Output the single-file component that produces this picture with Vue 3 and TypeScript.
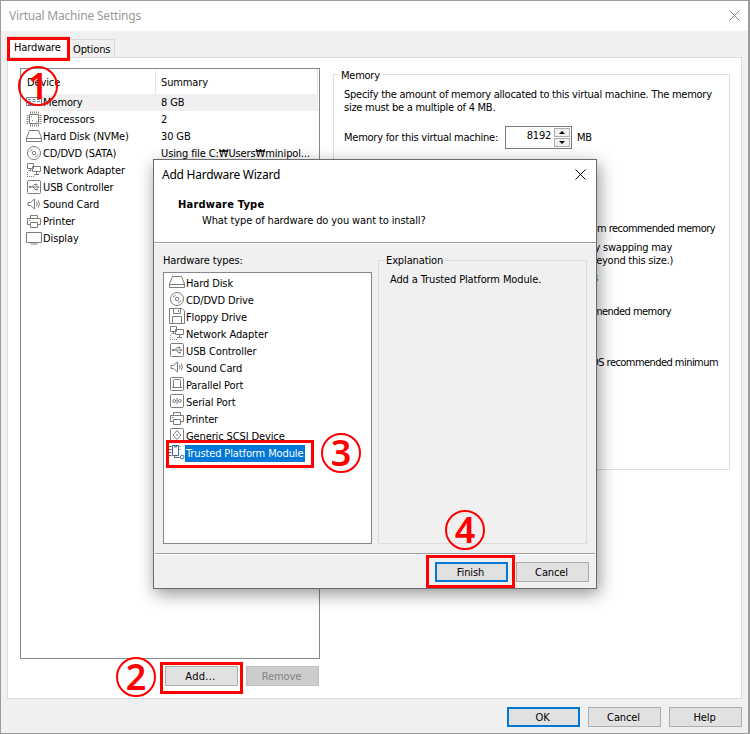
<script setup lang="ts">
interface Icon {
  d: string
  fill?: string
  tone?: string
}
interface Device {
  icon: string
  name: string
  summary?: string
}

const icons: Record<string, Icon> = {
  memory: { d: 'M.5 3.5h15v8H.5zM2 5.5h3M6.500 5.500h3M11 5.500h3M2 7.500h3M6.500 7.500h3M11 7.500h3M2 10.500h12', tone: '#6d8294' },
  cpu: {
    d: 'M3.500 3.500h9v9h-9zM4.500 .5v2M6.500 .5v2M8.500 .5v2M10.500 .5v2M12.500 .5v2M4.500 13.500v2M6.500 13.500v2M8.500 13.500v2M10.500 13.500v2M12.500 13.500v2M.5 4.500h2M.5 6.500h2M.5 8.500h2M.5 10.500h2M.5 12.500h2M13.500 4.500h2M13.500 6.500h2M13.500 8.500h2M13.500 10.500h2M13.500 12.500h2',
    fill: 'M5 5h1v1H5zM10 10h1v1h-1zM6 9h1v1H6z',
  },
  disk: { d: 'M3.500 2.500h9l3 7.500v3.500H.5V10zM.5 10.500h15' },
  cd: {
    d: 'M14.500 8A6.500 6.500 0 1 1 1.500 8A6.500 6.500 0 1 1 14.500 8M9.800 8A1.800 1.800 0 1 1 6.200 8A1.800 1.800 0 1 1 9.800 8M4 6.500Q4.700 4.800 6.500 4.200M12 9.500Q11.300 11.200 9.500 11.800',
  },
  floppy: { d: 'M.5 .5h12.500l2.500 2.500v12.500H.5zM4.500 .5v5h7v-5M9.500 2v2M3.500 15.500v-7h9v7' },
  net: {
    d: 'M1.500 1.500h6v5h-6zM4.500 6.500v2M2.500 8.500h3M6.500 4.500h8v5h-8zM10.500 9.500v3M8 12.500h5',
    fill: 'M1 10h1v1H1zM1 12h1v1H1zM1 14h1v1H1zM3 14h1v1H3zM5 14h1v1H5zM7 14h1v1H7z',
  },
  usb: {
    d: 'M2.500 1.500h11q1 0 1 1v11q0 1-1 1h-11q-1 0-1-1v-11q0-1 1-1zM4 8h8.500M6 8L8 5.500h2M7.500 8L9 10.500h1.500',
    fill: 'M3 7h2v2H3zM9.500 4.700h1.800v1.700H9.500zM10 9.700h1.800v1.700H10zM11.500 6.500L13.500 8L11.500 9.500z',
  },
  sound: { d: 'M2 6.500h2.500L8.500 3v10L4.500 9.500H2zM10.500 6q1.200 2 0 4M12.300 4.500q2.200 3.500 0 7' },
  parallel: { d: 'M2.500 1.500h11q1 0 1 1v11q0 1-1 1h-11q-1 0-1-1v-11q0-1 1-1zM4.500 11V4.500q0-1 1-1h5q1 0 1 1V11M3 11.500h10' },
  serial: {
    d: 'M2.500 1.500h11q1 0 1 1v11q0 1-1 1h-11q-1 0-1-1v-11q0-1 1-1zM8 5v6M6.500 8A1.300 1.500 0 1 1 3.900 8A1.300 1.500 0 1 1 6.500 8M12.100 8A1.300 1.500 0 1 1 9.500 8A1.300 1.500 0 1 1 12.100 8',
  },
  printer: { d: 'M4.500 5.500v-3h7v3M4 11.500H1.500v-6h13v6H12M4.500 9.500h7v5h-7zM3 7.500h1.500' },
  scsi: { d: 'M2.500 1.500h11q1 0 1 1v11q0 1-1 1h-11q-1 0-1-1v-11q0-1 1-1zM8 3.500L12 8L8 12.500L4 8zM8 7v2' },
  display: { d: 'M.5 2.500h15v10H.5zM4.500 14h7' },
  tpm: {
    d: 'M3.500 1.500h6v10h-6zM5.500 1.500v1.500h2V1.500M0 2.500h2.500M0 5.500h2.500M0 8.500h2.500M0 11.500h2.500M10.500 2.500h1M10.500 5.500h1M5.500 12v1.500h5M15 13A1.800 1.800 0 1 1 11.400 13A1.800 1.800 0 1 1 15 13',
    tone: '#43698c',
  },
}

const devices: Device[] = [
  { icon: 'memory', name: 'Memory', summary: '8 GB' },
  { icon: 'cpu', name: 'Processors', summary: '2' },
  { icon: 'disk', name: 'Hard Disk (NVMe)', summary: '30 GB' },
  { icon: 'cd', name: 'CD/DVD (SATA)', summary: 'Using file C:₩Users₩minipol...' },
  { icon: 'net', name: 'Network Adapter' },
  { icon: 'usb', name: 'USB Controller' },
  { icon: 'sound', name: 'Sound Card' },
  { icon: 'printer', name: 'Printer' },
  { icon: 'display', name: 'Display' },
]

const types: Device[] = [
  { icon: 'disk', name: 'Hard Disk' },
  { icon: 'cd', name: 'CD/DVD Drive' },
  { icon: 'floppy', name: 'Floppy Drive' },
  { icon: 'net', name: 'Network Adapter' },
  { icon: 'usb', name: 'USB Controller' },
  { icon: 'sound', name: 'Sound Card' },
  { icon: 'parallel', name: 'Parallel Port' },
  { icon: 'serial', name: 'Serial Port' },
  { icon: 'printer', name: 'Printer' },
  { icon: 'scsi', name: 'Generic SCSI Device' },
  { icon: 'tpm', name: 'Trusted Platform Module' },
]
</script>

<template>
  <div class="window">
    <header class="titlebar">
      <span>Virtual Machine Settings</span>
      <svg class="close" viewBox="0 0 11 11"><path d="M.5.5l10 10M10.500.5l-10 10" /></svg>
    </header>

    <nav class="tabs">
      <div class="tab active">Hardware</div>
      <div class="tab">Options</div>
    </nav>

    <main class="panel">
      <section class="left">
        <div class="devices">
          <div class="head"><span class="dev">Device</span><span class="sum">Summary</span></div>
          <div v-for="(d, i) in devices" :key="d.name" class="row" :class="{ current: i === 0 }">
            <svg class="icon" viewBox="0 0 16 16" :stroke="icons[d.icon].tone ?? '#7c7c7c'">
              <path :d="icons[d.icon].d" />
              <path v-if="icons[d.icon].fill" class="solid" :d="icons[d.icon].fill" />
            </svg>
            <span class="name">{{ d.name }}</span>
            <span class="value">{{ d.summary }}</span>
          </div>
        </div>
        <div class="actions">
          <button class="btn add">Add...</button>
          <button class="btn off">Remove</button>
        </div>
      </section>

      <section class="group memory">
        <span class="legend">Memory</span>
        <p class="intro">Specify the amount of memory allocated to this virtual machine. The memory<br />size must be a multiple of 4 MB.</p>
        <div class="amount">
          <span class="amount-label">Memory for this virtual machine:</span>
          <div class="spin">
            <span class="num">8192</span>
            <span class="arrows">
              <svg viewBox="0 0 14 7"><path d="M4 5L7 2L10 5z" /></svg>
              <svg viewBox="0 0 14 7"><path d="M4 2L7 5L10 2z" /></svg>
            </span>
          </div>
          <span>MB</span>
        </div>
        <div class="hints">
          <p class="h1">Maximum recommended memory</p>
          <p class="h2">(Memory swapping may</p>
          <p class="h3">occur beyond this size.)</p>
          <p class="h4">13.3 GB</p>
          <p class="h5">Recommended memory</p>
          <p class="h6">Guest OS recommended minimum</p>
        </div>
      </section>
    </main>

    <footer class="foot">
      <button class="btn primary">OK</button>
      <button class="btn">Cancel</button>
      <button class="btn">Help</button>
    </footer>

    <div class="dialog">
      <header class="dlg-head">
        <div class="dlg-title">
          <span>Add Hardware Wizard</span>
          <svg class="close" viewBox="0 0 11 11"><path d="M.5.5l10 10M10.500.5l-10 10" /></svg>
        </div>
        <h1>Hardware Type</h1>
        <p>What type of hardware do you want to install?</p>
      </header>
      <div class="dlg-body">
        <div class="types-col">
          <div class="label">Hardware types:</div>
          <div class="types">
            <div v-for="(t, i) in types" :key="t.name" class="row" :class="{ selected: i === 10 }">
              <svg class="icon" viewBox="0 0 16 16" :stroke="icons[t.icon].tone ?? '#7c7c7c'">
                <path :d="icons[t.icon].d" />
                <path v-if="icons[t.icon].fill" class="solid" :d="icons[t.icon].fill" />
              </svg>
              <span class="name">{{ t.name }}</span>
            </div>
          </div>
        </div>
        <div class="group explain">
          <span class="legend">Explanation</span>
          <p>Add a Trusted Platform Module.</p>
        </div>
      </div>
      <footer class="dlg-foot">
        <button class="btn primary">Finish</button>
        <button class="btn">Cancel</button>
      </footer>
    </div>

    <div class="mark mark-tab"></div>
    <div class="mark mark-add"></div>
    <div class="mark mark-type"></div>
    <div class="mark mark-finish"></div>
    <div class="step step-1"><b>1</b></div>
    <div class="step step-2"><b>2</b></div>
    <div class="step step-3"><b>3</b></div>
    <div class="step step-4"><b>4</b></div>
  </div>
</template>

<style>
body {
  margin: 0;
  overflow: hidden;
}
</style>

<style scoped>
* {
  box-sizing: border-box;
}
p,
h1 {
  margin: 0;
}
.window {
  position: relative;
  width: 750px;
  height: 734px;
  display: flex;
  flex-direction: column;
  background: #f0f0f0;
  border: 1px solid #9c9c9c;
  border-right-width: 2px;
  font: 11px/13px 'DejaVu Sans Condensed', 'DejaVu Sans', 'Noto Sans CJK KR', sans-serif;
  font-stretch: condensed;
  letter-spacing: -0.12px;
  color: #000;
  white-space: nowrap;
}
.titlebar {
  height: 30px;
  background: #fff;
  display: flex;
  justify-content: space-between;
  align-items: center;
  padding: 0 8px;
  font: 12px/16px 'Noto Sans', sans-serif;
  letter-spacing: -0.2px;
  color: #999;
}
.close {
  width: 11px;
  height: 11px;
  stroke: currentColor;
  fill: none;
}
.titlebar .close {
  stroke: #888;
  margin-bottom: 2px;
}
.tabs {
  height: 26px;
  display: flex;
  align-items: flex-end;
  padding-left: 6px;
}
.tab {
  width: 46px;
  height: 18px;
  border: 1px solid #d9d9d9;
  border-bottom: 0;
  padding: 3px 0 0 3px;
  line-height: 13px;
}
.tab.active {
  width: 62px;
  height: 21px;
  background: #fff;
  padding: 4px 0 0 6px;
}
.panel {
  margin-left: 6px;
  width: 735px;
  height: 642px;
  border: 1px solid #dcdcdc;
  background: #fff;
  display: flex;
  padding: 10px 0 0 12px;
}
.left {
  width: 300px;
}
.devices {
  height: 591px;
  border: 1px solid #828790;
  background: #fff;
}
.head {
  display: flex;
  height: 25px;
  padding-top: 1px;
  margin-right: 1px;
  border-right: 1px solid #e5e5e5;
  line-height: 25px;
}
.dev {
  width: 135px;
  padding-left: 6px;
  border-right: 1px solid #e5e5e5;
}
.sum {
  padding-left: 5px;
}
.row {
  display: flex;
  align-items: flex-start;
  height: 17px;
  padding-left: 5px;
}
.icon {
  width: 16px;
  height: 16px;
  fill: none;
  flex: none;
}
.icon .solid {
  fill: #7c7c7c;
  stroke: none;
}
.row .name {
  width: 113px;
  height: 17px;
  line-height: 18px;
  padding-left: 1px;
}
.row .value {
  flex: 1;
  height: 17px;
  line-height: 18px;
  padding-left: 6px;
  margin-right: 1px;
}
.current .name,
.current .value {
  background: #f0f0f0;
}
.actions {
  display: flex;
  justify-content: flex-end;
  gap: 8px;
  padding: 7px 1px 0 0;
}
.btn {
  width: 73px;
  height: 20px;
  padding: 0 2px 0 0;
  border: 1px solid #adadad;
  border-radius: 0;
  background: #e1e1e1;
  color: #000;
  font: inherit;
  letter-spacing: inherit;
  line-height: 17px;
}
.btn.primary {
  border: 2px solid #0078d7;
  line-height: 15px;
}
.btn.add {
  letter-spacing: 0.3px;
}
.btn.off {
  background: #ccc;
  border-color: #bfbfbf;
  color: #838383;
}
.group {
  border: 1px solid #dcdcdc;
}
.legend {
  display: block;
  width: max-content;
  line-height: 13px;
  margin: -7px 0 0 5px;
  padding: 0 2px;
}
.memory {
  margin: 6px 0 0 13px;
  width: 397px;
  height: 396px;
  letter-spacing: -0.25px;
}
.memory .legend {
  background: #fff;
  padding-top: 1px;
}
.intro {
  padding: 6px 0 0 10px;
}
.amount {
  display: flex;
  align-items: center;
  height: 23px;
  margin: 12px 0 0 10px;
}
.amount-label {
  width: 161px;
}
.spin {
  width: 67px;
  height: 23px;
  border: 1px solid #7a7a7a;
  display: flex;
  justify-content: flex-end;
  padding: 1px;
  margin-right: 5px;
}
.num {
  padding: 1px 3px 0 0;
}
.arrows {
  display: flex;
  flex-direction: column;
  gap: 1px;
}
.arrows svg {
  width: 16px;
  height: 9px;
  background: #f0f0f0;
  border: 1px solid #acacac;
}
.hints {
  display: flex;
  flex-direction: column;
  align-items: flex-end;
  padding-top: 73px;
}
.h1,
.h5,
.h6 {
  letter-spacing: -0.55px;
}
.h1 {
  margin-right: 14px;
}
.h2 {
  margin: 6px 57px 0 0;
}
.h3 {
  margin-right: 56px;
}
.h4 {
  margin: 5px 131px 0 0;
  color: #0a64ad;
}
.h5 {
  margin: 20px 58px 0 0;
}
.h6 {
  margin: 38px 11px 0 0;
}
.foot {
  display: flex;
  justify-content: flex-end;
  gap: 8px;
  padding: 8px 6px 0 0;
}
.dialog {
  position: absolute;
  left: 152px;
  top: 158px;
  width: 444px;
  height: 430px;
  border: 1px solid #6b6b6b;
  background: #f0f0f0;
  box-shadow: 2px 5px 16px rgba(0, 0, 0, 0.42);
}
.dlg-head {
  height: 83px;
  background: #fff;
  border-bottom: 1px solid #a0a0a0;
  box-shadow: 0 1px #fff;
}
.dlg-title {
  display: flex;
  align-items: center;
  justify-content: space-between;
  height: 29px;
  padding: 0 10px 0 8px;
  font: 12px/16px 'Noto Sans', sans-serif;
  letter-spacing: -0.25px;
}
h1 {
  font-size: 11px;
  line-height: 13px;
  padding: 9px 0 0 24px;
  letter-spacing: 0.22px;
}
.dlg-head p {
  padding: 3px 0 0 48px;
}
.dlg-body {
  display: flex;
  gap: 6px;
  height: 310px;
  padding: 11px 0 0 9px;
}
.label {
  height: 18px;
}
.types {
  width: 209px;
  height: 272px;
  border: 1px solid #828790;
  background: #fff;
  padding-top: 2px;
}
.types .icon {
  margin-top: -1px;
}
.types .row .name {
  width: auto;
  line-height: 17px;
  padding: 0 2px 0 1px;
}
.types .selected .name {
  background: #0078d7;
  color: #fff;
}
.explain {
  width: 209px;
  height: 284px;
  margin-top: 6px;
}
.explain .legend {
  background: #f0f0f0;
}
.explain p {
  padding: 6px 0 0 11px;
}
.dlg-foot {
  display: flex;
  justify-content: flex-end;
  gap: 8px;
  margin: 0 1px;
  padding: 8px 6px 0 0;
  border-top: 1px solid #a0a0a0;
  box-shadow: inset 0 1px #fff;
}
.mark {
  position: absolute;
  border: 3px solid #fe0000;
}
.mark-tab {
  left: 6px;
  top: 36px;
  width: 63px;
  height: 24px;
}
.mark-add {
  left: 159px;
  top: 661px;
  width: 83px;
  height: 32px;
}
.mark-type {
  left: 165px;
  top: 439px;
  width: 148px;
  height: 28px;
}
.mark-finish {
  left: 425px;
  top: 554px;
  width: 89px;
  height: 33px;
}
.step {
  position: absolute;
  width: 40px;
  height: 40px;
  border: 2px solid #fe0000;
  border-radius: 50%;
  display: flex;
  align-items: center;
  justify-content: center;
  color: #fe0000;
  font: 36px/36px 'Noto Sans', sans-serif;
  letter-spacing: 0;
}
.step b {
  font-weight: 600;
}
.step-1 {
  left: 17px;
  top: 65px;
}
.step-2 {
  left: 115px;
  top: 656px;
}
.step-3 {
  left: 320px;
  top: 432px;
}
.step-4 {
  left: 444px;
  top: 509px;
}
</style>
